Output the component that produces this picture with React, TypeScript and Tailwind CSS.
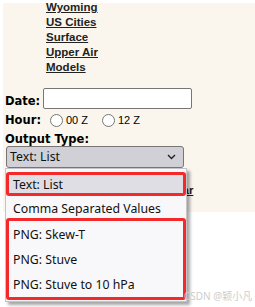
import { ReactNode } from "react";

const links = ["Wyoming", "US Cities", "Surface", "Upper Air", "Models"];

const options = [
  "Text: List",
  "Comma Separated Values",
  "PNG: Skew-T",
  "PNG: Stuve",
  "PNG: Stuve to 10 hPa",
];

const Radio = ({ className = "" }: { className?: string }) => (
  <span
    className={`inline-block w-[13px] h-[13px] rounded-full border border-[#767676] bg-white ${className}`}
  />
);

const Label = ({ children }: { children: ReactNode }) => (
  <span className="font-['DejaVu_Sans',sans-serif] font-bold text-[11.5px] leading-[14px] text-black">
    {children}
  </span>
);

const App = () => {
  return (
    <div className="relative w-[255px] h-[307px] overflow-hidden bg-white pt-[3px] pl-[3px]">
      <div className="h-[209px] overflow-hidden bg-[#faf6ee] text-[11.5px] leading-[14px]">
        <ul className="-mt-[3px] pl-[43px] font-['Liberation_Sans',sans-serif] font-bold text-[11.5px] leading-[15px] text-[#222]">
          {links.map((link) => (
            <li key={link}>
              <a className="underline">{link}</a>
            </li>
          ))}
        </ul>

        <div className="mt-[13px] flex items-end gap-[3px] pl-[2px] h-[21px]">
          <div className="mb-[1px] leading-[14px]">
            <Label>Date:</Label>
          </div>
          <div className="w-[149px] h-[21px] rounded-[2px] border border-[#767676] bg-white" />
        </div>

        <div className="mt-[2px] flex items-center h-[18px] pl-[2px] font-['Liberation_Sans',sans-serif] text-[11px] leading-[14px] text-black">
          <Label>Hour:</Label>
          <Radio className="ml-[9px]" />
          <span className="ml-[3px]">00 Z</span>
          <Radio className="ml-[14px]" />
          <span className="ml-[3px]">12 Z</span>
        </div>

        <div className="h-[17px] pt-[3px] pl-[2px] leading-[14px]">
          <Label>Output Type:</Label>
        </div>

        <div className="ml-[3px] w-[178px] h-[22px] flex items-center justify-between rounded-[3px] border border-[#767676] bg-[#d0d0d6] pl-[3px] pr-[7px] font-['Noto_Sans',sans-serif] text-[12.3px] leading-[18px] text-[#111]">
          <span>Text: List</span>
          <svg width="9" height="6" viewBox="0 0 9 6" fill="none">
            <path d="M1 1l3.5 3.5L8 1" stroke="#222" strokeWidth="1.4" />
          </svg>
        </div>

        <div className="mt-[15px] pl-[85px] font-['Liberation_Sans',sans-serif] font-bold text-[11.5px] leading-[15px] text-[#222]">
          <a className="underline">Sounding Calendar</a>
        </div>
      </div>

      {/* open select list */}
      <div className="absolute left-[5px] top-[168px] w-[182px] pt-[3px] pb-[1px] border border-[#c4c4c8] bg-[#f8f8fb] shadow-[3px_3px_3px_rgba(0,0,0,0.35)] font-['Noto_Sans',sans-serif] text-[12.3px] leading-[18px] text-[#111]">
        <div className="h-[24px] pt-[0.5px] pl-[4px] rounded-[3px] border-[3px] border-[#f42a2a] bg-[#dedee4]">
          {options[0]}
        </div>
        <div className="h-[22px] pt-[4px] pl-[7px]">{options[1]}</div>
        <div className="pt-[1px] rounded-[3px] border-[3px] border-[#f42a2a]">
          {options.slice(2).map((opt) => (
            <div key={opt} className="h-[25px] flex items-center pl-[4px]">
              {opt}
            </div>
          ))}
        </div>
      </div>

      <div className="absolute left-[184px] top-[290px] whitespace-nowrap font-['Noto_Sans','Noto_Sans_CJK_SC',sans-serif] text-[10px] leading-[12px] text-[#cdcdcd]">
        CSDN @颖小凡
      </div>
    </div>
  );
};

export default App;
